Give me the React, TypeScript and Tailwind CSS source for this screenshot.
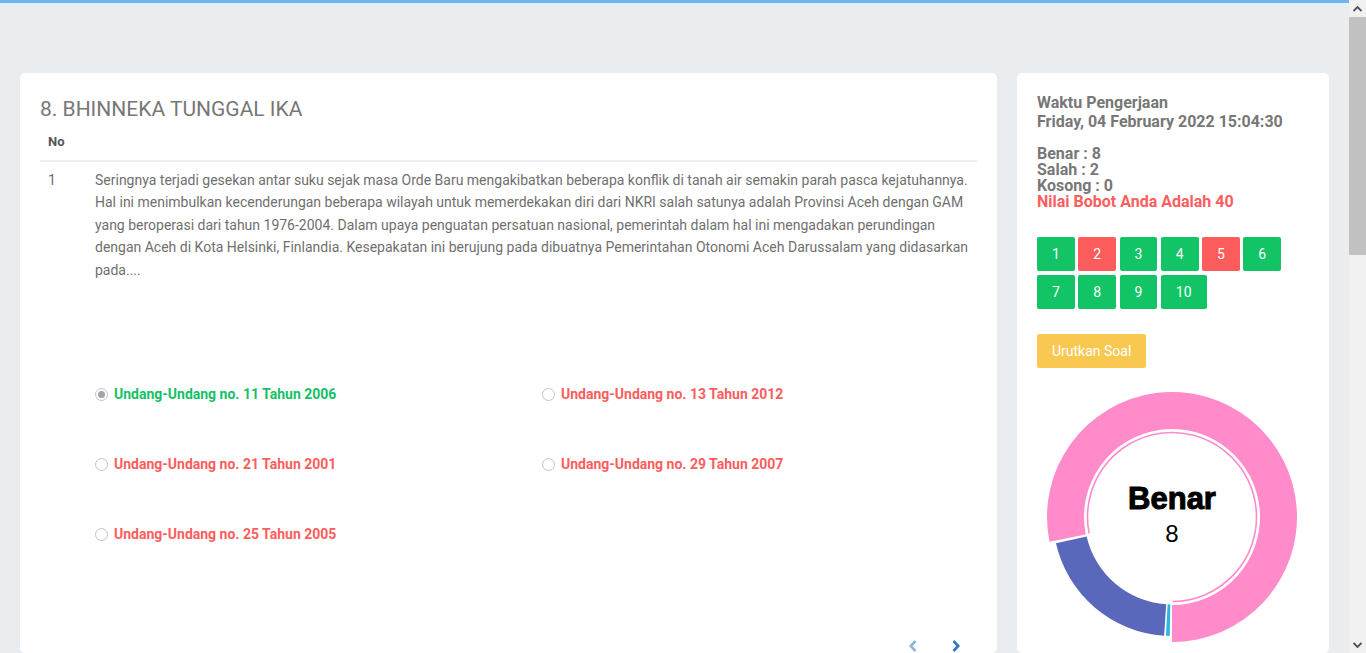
import React from "react";

const CX = 125;
const CY = 125;

function pt(a: number, r: number) {
  const t = (a * Math.PI) / 180;
  return `${(CX + r * Math.sin(t)).toFixed(2)} ${(CY - r * Math.cos(t)).toFixed(2)}`;
}

function ring(a0: number, a1: number, ro: number, ri: number) {
  const large = a1 - a0 > 180 ? 1 : 0;
  return `M ${pt(a0, ro)} A ${ro} ${ro} 0 ${large} 1 ${pt(a1, ro)} L ${pt(a1, ri)} A ${ri} ${ri} 0 ${large} 0 ${pt(a0, ri)} Z`;
}

function line(a0: number, a1: number, r: number) {
  const large = a1 - a0 > 180 ? 1 : 0;
  return `M ${pt(a0, r)} A ${r} ${r} 0 ${large} 1 ${pt(a1, r)}`;
}

const answers = [
  { n: 1, ok: true },
  { n: 2, ok: false },
  { n: 3, ok: true },
  { n: 4, ok: true },
  { n: 5, ok: false },
  { n: 6, ok: true },
  { n: 7, ok: true },
  { n: 8, ok: true },
  { n: 9, ok: true },
  { n: 10, ok: true },
];

const options = [
  { label: "Undang-Undang no. 11 Tahun 2006", checked: true },
  { label: "Undang-Undang no. 13 Tahun 2012", checked: false },
  { label: "Undang-Undang no. 21 Tahun 2001", checked: false },
  { label: "Undang-Undang no. 29 Tahun 2007", checked: false },
  { label: "Undang-Undang no. 25 Tahun 2005", checked: false },
];

function Radio({ checked }: { checked: boolean }) {
  return (
    <span className="flex h-[13px] w-[13px] shrink-0 items-center justify-center rounded-full border-[1.5px] border-[#c3c3ca] bg-white">
      {checked && <span className="h-[7px] w-[7px] rounded-full bg-[#a3a3ab]" />}
    </span>
  );
}

function Donut() {
  return (
    <div className="relative ml-[10px] h-[250px] w-[250px]">
      <svg width="250" height="250" viewBox="0 0 250 250">
        <path d={ring(183.8, 257.2, 119, 87.5)} fill="#5a68bb" />
        <path d={ring(181.1, 182.9, 119, 87.5)} fill="#2bb6de" />
        <path d={ring(258.6, 540, 125, 88)} fill="#ff8bcb" />
        <path d={line(258.8, 539.6, 84.5)} fill="none" stroke="#ff8bcb" strokeWidth="1.6" />
      </svg>
      <div className="absolute inset-0 flex flex-col items-center justify-center text-black">
        <div className="font-['Liberation_Sans',sans-serif] text-[31px] font-bold leading-[34px] [-webkit-text-stroke:1px_black]">
          Benar
        </div>
        <div className="font-['Liberation_Sans',sans-serif] text-[24px] leading-[36px]">8</div>
      </div>
    </div>
  );
}

function Chevron({ dir, color }: { dir: "left" | "right"; color: string }) {
  return (
    <svg width="10" height="14" viewBox="0 0 10 14">
      <path
        d={dir === "left" ? "M7.5 2 L2.8 7 L7.5 12" : "M2.5 2 L7.2 7 L2.5 12"}
        fill="none"
        stroke={color}
        strokeWidth="2.6"
      />
    </svg>
  );
}

export default function App() {
  return (
    <div className="flex h-[653px] w-[1366px] overflow-hidden bg-[#e9edf0] font-['Roboto',sans-serif]">
      <div className="flex w-[1349px] flex-col">
        <div className="h-[3px] shrink-0 bg-[#6ab4f8]" />
        <div className="flex flex-1 gap-5 px-5 pt-[70px]">
          {/* soal */}
          <div className="w-[977px] shrink-0 rounded-[5px] bg-white px-5 pt-[23px]">
            <h4 className="text-[21px] leading-[26px] text-[#777]">8. BHINNEKA TUNGGAL IKA</h4>
            <div className="mt-[9px] grid grid-cols-[47px_1fr] border-b-2 border-[#eceef1] pb-[8px] pt-[1px]">
              <div className="px-2 text-[13px] font-bold leading-[20px] text-[#555]">No</div>
              <div />
            </div>
            <div className="grid grid-cols-[47px_1fr] pt-[7px]">
              <div className="px-2 text-[14px] leading-[22.4px] text-[#6f6f6f]">1</div>
              <div className="px-2">
                <p className="text-[14px] leading-[22.4px] text-[#6f6f6f]">
                  Seringnya terjadi gesekan antar suku sejak masa Orde Baru mengakibatkan beberapa konflik di tanah air semakin parah pasca kejatuhannya. Hal ini menimbulkan kecenderungan beberapa wilayah untuk memerdekakan diri dari NKRI salah satunya adalah Provinsi Aceh dengan GAM yang beroperasi dari tahun 1976-2004. Dalam upaya penguatan persatuan nasional, pemerintah dalam hal ini mengadakan perundingan dengan Aceh di Kota Helsinki, Finlandia. Kesepakatan ini berujung pada dibuatnya Pemerintahan Otonomi Aceh Darussalam yang didasarkan pada....
                </p>
                <div className="mt-[103px] grid grid-cols-[447px_1fr] gap-y-[50px]">
                  {options.map((o) => (
                    <label key={o.label} className="flex h-[20px] items-center gap-[6px]">
                      <Radio checked={o.checked} />
                      <span
                        className={
                          o.checked
                            ? "text-[14px] font-bold text-[#14c166]"
                            : "text-[14px] font-bold text-[#fc5d5d]"
                        }
                      >
                        {o.label}
                      </span>
                    </label>
                  ))}
                </div>
                <div className="mt-[95px] flex justify-end gap-[33px] pr-[8px]">
                  <Chevron dir="left" color="#8db6dd" />
                  <Chevron dir="right" color="#2b79c0" />
                </div>
              </div>
            </div>
          </div>

          {/* hasil */}
          <div className="w-[312px] shrink-0 rounded-[5px] bg-white px-5 pt-[20px]">
            <div className="text-[16px] font-bold leading-[19px] text-[#777]">
              <div>Waktu Pengerjaan</div>
              <div>Friday, 04 February 2022 15:04:30</div>
            </div>
            <div className="mt-[15px] text-[16px] font-bold leading-[16px] text-[#777]">
              <div className="h-[16px]">Benar : 8</div>
              <div className="h-[16px]">Salah : 2</div>
              <div className="h-[16px]">Kosong : 0</div>
              <div className="h-[16px] text-[#fc5d5d]">Nilai Bobot Anda Adalah 40</div>
            </div>
            <div className="mt-[27px] flex w-[250px] flex-wrap gap-x-[3.4px] gap-y-[4px]">
              {answers.map((a) => (
                <button
                  key={a.n}
                  className={
                    a.ok
                      ? "flex h-[34px] items-center rounded-[2px] bg-[#12c465] px-[15px] text-[14px] text-white"
                      : "flex h-[34px] items-center rounded-[2px] bg-[#fc5c5c] px-[15px] text-[14px] text-white"
                  }
                >
                  {a.n}
                </button>
              ))}
            </div>
            <button className="mt-[25px] flex h-[34px] items-center rounded-[2px] bg-[#f9c851] px-[15px] text-[14px] text-white">
              Urutkan Soal
            </button>
            <div className="mt-[24px]">
              <Donut />
            </div>
          </div>
        </div>
      </div>

      {/* scrollbar */}
      <div className="flex w-[17px] flex-col bg-[#f1f1f1]">
        <div className="flex h-[17px] shrink-0 items-center justify-center">
          <svg width="9" height="6" viewBox="0 0 9 6">
            <path d="M0.5 5 L4.5 1 L8.5 5" fill="none" stroke="#505050" strokeWidth="1.8" />
          </svg>
        </div>
        <div className="h-[238px] shrink-0 bg-[#c1c1c1]" />
        <div className="flex-1" />
        <div className="flex h-[17px] shrink-0 items-center justify-center">
          <svg width="9" height="6" viewBox="0 0 9 6">
            <path d="M0.5 1 L4.5 5 L8.5 1" fill="none" stroke="#505050" strokeWidth="1.8" />
          </svg>
        </div>
      </div>
    </div>
  );
}
